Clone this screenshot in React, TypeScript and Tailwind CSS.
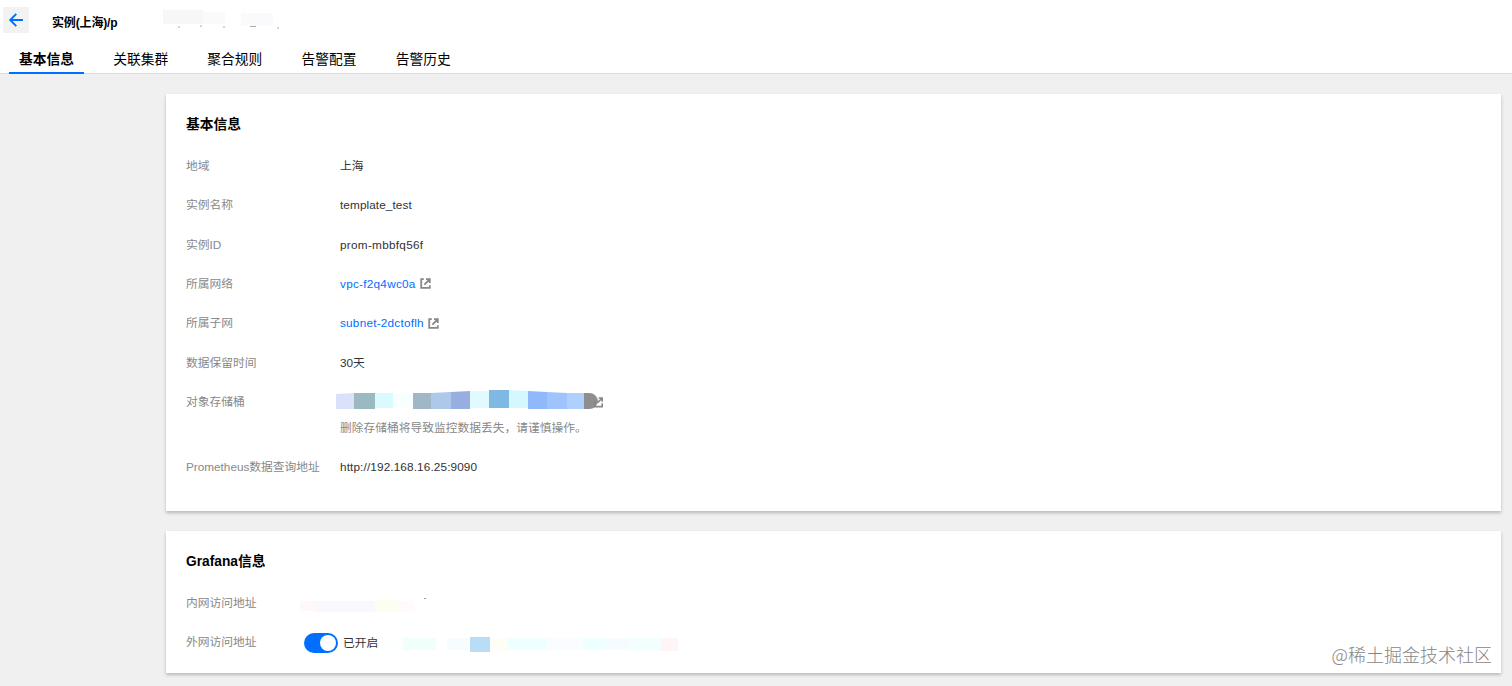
import React from 'react';

const tabs = ['基本信息', '关联集群', '聚合规则', '告警配置', '告警历史'];

const BackIcon: React.FC = () => (
  <svg className="w-[26px] h-[26px]" viewBox="0 0 26 26" fill="none" stroke="#006eff" strokeWidth={1.9}>
    <path d="M20 13H7.6M13.3 6.8L7.2 13l6.1 6.2" />
  </svg>
);

const ExternalIcon: React.FC = () => (
  <svg className="w-[11px] h-[11px] shrink-0" viewBox="0 0 11 11" fill="none" stroke="#888888" strokeWidth={1.8}>
    <path d="M3.8 1.2H1.2v8.6h8.6V7.2M6 1.2h3.8V5M9.5 1.5L4.4 6.6" />
  </svg>
);

const Row: React.FC<{ label: string; children?: React.ReactNode }> = ({ label, children }) => (
  <div className="flex items-center h-[39.3px]">
    <div className="w-[154px] shrink-0 text-[#888888] whitespace-nowrap">{label}</div>
    <div className="flex items-center whitespace-nowrap">{children}</div>
  </div>
);

const Card: React.FC<{ title: string; className: string; children?: React.ReactNode }> = ({ title, className, children }) => (
  <section className={`bg-white pl-5 shadow-[0_2px_3px_rgba(54,58,80,0.3)] ${className}`}>
    <h3 className="pt-[21px] h-[52.4px] text-[13.75px] leading-5 font-bold text-black">{title}</h3>
    {children}
  </section>
);

const BucketMosaic: React.FC = () => (
  <svg className="-ml-1 -mt-[3px] w-[268px] h-5 shrink-0" viewBox="0 0 268 20">
    <path fill="#dae1fa" d="M0 4l18-1v16H0z" />
    <path fill="#9ab9c1" d="M18 3h21v16H18z" />
    <path fill="#d9fbff" d="M39 3h18v15H39z" />
    <path fill="#f8ffff" d="M57 3h19v15H57z" />
    <path fill="#a0b7c7" d="M77 3h18v16H77z" />
    <path fill="#acc8eb" d="M95 3l20-1v17H95z" />
    <path fill="#98aede" d="M115 2l19-1v18h-19z" />
    <path fill="#e1faff" d="M134 1h19v17h-19z" />
    <path fill="#80b8e4" d="M153 0h20v18h-20z" />
    <path fill="#d4f8ff" d="M173 0l19 1v17h-19z" />
    <path fill="#8fb9fb" d="M192 1l19 1v17h-19z" />
    <path fill="#9fc4fd" d="M211 2l20 1v16h-20z" />
    <path fill="#afd0ff" d="M231 3h18v16h-18z" />
    <path fill="#8e8e8e" d="M248 3h5c5 0 8 3 9 8-1 5-4 8-9 8h-5z" />
    <path d="M259 11v5.6h7.2v-3.4M262.5 8h3.7v3.8M266 8.2l-4.7 4.7" fill="none" stroke="#888888" strokeWidth="1.6" />
  </svg>
);

const App: React.FC = () => {
  return (
    <div className="relative w-[1512px] h-[686px] overflow-hidden bg-[#f0f0f0] text-[11.75px] leading-5 text-[#333333] font-['Liberation_Sans','Noto_Sans_CJK_SC',sans-serif]">
      <header className="h-[74px] bg-white border-b border-[#dcdcdc]">
        <div className="flex items-center h-[45px] pl-[3px] pb-[5px]">
          <button className="w-[26px] h-[26px] bg-[#f2f2f2]">
            <BackIcon />
          </button>
          <h1 className="ml-[23px] mt-[5px] text-[12px] tracking-[-0.15px] font-bold text-black">实例(上海)/p</h1>
          {/* masked instance name */}
          <svg className="ml-[46px] w-[120px] h-5" viewBox="0 0 120 20">
            <path fill="#f7f7f9" d="M0 0h40v14H0z" />
            <path fill="#fafafc" d="M40 2h22v12H40zM78 3h32v13H78z" />
            <path stroke="#aaaaaa" d="M15 17h2M37 16h2M60 17h2M87 16.5h6M114 18h2" />
          </svg>
        </div>
        <nav className="flex h-[29px] pl-[9px] gap-[19.2px] text-[13.75px] text-black">
          {tabs.map((tab, i) => (
            <div
              key={tab}
              className={`w-[75px] h-[29px] pt-[5px] text-center whitespace-nowrap ${i === 0 ? 'font-bold border-b-2 border-[#006eff]' : ''}`}
            >
              {tab}
            </div>
          ))}
        </nav>
      </header>

      <main className="pl-[166px] pr-[11px] pt-5 flex flex-col gap-5">
        <Card title="基本信息" className="h-[417px]">
          <Row label="地域">上海</Row>
          <Row label="实例名称">
            <span className="tracking-[0.1px]">template_test</span>
          </Row>
          <Row label="实例ID">
            <span className="tracking-[0.28px]">prom-mbbfq56f</span>
          </Row>
          <Row label="所属网络">
            <a className="text-[#006eff] mr-1 tracking-[0.26px]">vpc-f2q4wc0a</a>
            <ExternalIcon />
          </Row>
          <Row label="所属子网">
            <a className="text-[#006eff] mr-1 tracking-[0.23px]">subnet-2dctoflh</a>
            <ExternalIcon />
          </Row>
          <Row label="数据保留时间">30天</Row>
          <Row label="对象存储桶">
            <BucketMosaic />
          </Row>
          <p className="-mt-[3.5px] h-[29px] pl-[154px] text-[#888888]">删除存储桶将导致监控数据丢失，请谨慎操作。</p>
          <Row label="Prometheus数据查询地址">
            <span className="tracking-[0.13px]">http://192.168.16.25:9090</span>
          </Row>
        </Card>

        <Card title="Grafana信息" className="h-[142px]">
          <Row label="内网访问地址">
            <svg className="-ml-10 w-[130px] h-5" viewBox="0 0 130 20">
              <path fill="#fff7f8" d="M0 8h15v10H0z" />
              <path fill="#f8f8ff" d="M15 8h60v11H15z" />
              <path fill="#fcfff0" d="M75 7h22v12H75z" />
              <path fill="#fffbfc" d="M97 8h18v11H97z" />
              <path fill="#999999" d="M124 5h2v1h-2z" />
            </svg>
          </Row>
          <Row label="外网访问地址">
            <div className="-ml-[36px] mt-px w-[34px] h-5 p-0.5 flex justify-end rounded-full bg-[#006eff]">
              <div className="w-4 h-4 rounded-full bg-white"></div>
            </div>
            <span className="ml-[5px] mt-[2px]">已开启</span>
            <svg className="ml-[6px] mt-[6px] w-[300px] h-5" viewBox="0 0 300 20">
              <path fill="#fcfffd" d="M0 3h19v12H0z" />
              <path fill="#f0fffa" d="M19 3h33v12H19z" />
              <path fill="#f7fdff" d="M63 3h22v12H63z" />
              <path fill="#b9dcf7" d="M86 2h20v15H86z" />
              <path fill="#fdfff7" d="M106 3h18v13h-18z" />
              <path fill="#edfffe" d="M124 3h39v12h-39z" />
              <path fill="#fafcff" d="M163 3h36v12h-36z" />
              <path fill="#edfffe" d="M199 3h22v12h-22z" />
              <path fill="#f6fbff" d="M221 3h24v12h-24z" />
              <path fill="#f2fffd" d="M245 3h32v13h-32z" />
              <path fill="#fff5f7" d="M277 3h17v13h-17z" />
            </svg>
          </Row>
        </Card>
      </main>

      <div className="absolute right-5 bottom-[18px] text-[18px] leading-7 whitespace-nowrap text-[#858585] font-['Noto_Sans_CJK_SC',sans-serif] font-light [text-shadow:1px_1px_1px_#ffffff]">
        @稀土掘金技术社区
      </div>
    </div>
  );
};

export default App;
